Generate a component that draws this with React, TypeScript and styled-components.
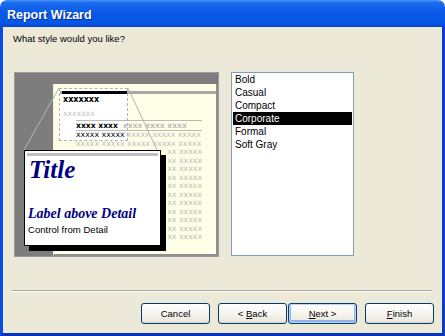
import React from 'react'
import styled, { createGlobalStyle } from 'styled-components'

const GlobalStyle = createGlobalStyle`
  html, body {
    margin: 0;
    padding: 0;
    background: #ffffff;
    overflow: hidden;
  }
  #root {
    width: 445px;
    height: 336px;
  }
`

const Window = styled.div`
  width: 445px;
  height: 336px;
  display: flex;
  flex-direction: column;
  font-family: "Liberation Sans", Arial, sans-serif;
`

const TitleBar = styled.div`
  height: 27px;
  flex: none;
  box-sizing: border-box;
  padding: 2px 0 0 7px;
  display: flex;
  align-items: center;
  border-radius: 7px 7px 0 0;
  background: linear-gradient(180deg, #4a93fa 0%, #1d6cf0 10%, #0a5ae7 45%, #0656e4 85%, #0546d0 100%);
  color: #ffffff;
  font-weight: bold;
  font-size: 12.5px;
  text-shadow: 1px 1px 0 #0b2f9a;
`

const Body = styled.div`
  flex: 1;
  background: #ece9d8;
  border: 3px solid #0b4be2;
  border-top: none;
  border-right-color: #0a3cc8;
  border-bottom-color: #0834bf;
  display: flex;
  flex-direction: column;
`

const Prompt = styled.div`
  font-size: 9.5px;
  line-height: 12px;
  color: #000;
  padding: 6px 0 0 10px;
`

const MainRow = styled.div`
  display: flex;
  align-items: flex-start;
  gap: 12px;
  margin-top: 27px;
  padding-left: 11px;
`

/* ---------- preview ---------- */

const Frame = styled.div`
  position: relative;
  width: 205px;
  height: 185px;
  box-sizing: border-box;
  border: 1px solid #9a9a9a;
  background: #7d7d7d;
  padding: 11px 0 0 38px;
  display: flex;
`

const Page = styled.div`
  position: relative;
  flex: 1;
  background: #fffee6;
  border-right: 2px solid #8f8f8f;
  border-bottom: 2px solid #8f8f8f;
  border-left: 1px solid #f4f2dc;
`

const Highlight = styled.div`
  position: absolute;
  left: 5px;
  top: 4px;
  width: 69px;
  height: 53px;
  box-sizing: border-box;
  border: 1px dashed #b4b4b4;
  background: #ffffff;
`

const PageContent = styled.div`
  position: relative;
  padding: 7px 0 0 6px;
  font-family: "DejaVu Sans", Verdana, sans-serif;
`

const TopRule = styled.div`
  height: 3px;
  background: #a9a9a9;
`

const TopBar = styled.div`
  width: 65px;
  height: 3px;
  margin-left: 2px;
  background: #000;
`

const PageHeader = styled.div<{ $faint?: boolean }>`
  margin: ${p => (p.$faint ? '4px' : '1px')} 0 0 3px;
  font-size: ${p => (p.$faint ? '7.7px' : '8px')};
  font-weight: ${p => (p.$faint ? 'normal' : 'bold')};
  line-height: 10px;
  color: ${p => (p.$faint ? '#c4c4c4' : '#000')};
  white-space: nowrap;
`

const Table = styled.div`
  margin: 1px 0 0 16px;
  width: 126px;
  border-top: 1px solid #b9b9b9;
`

const HeaderRow = styled.div`
  font-size: 7.6px;
  font-weight: bold;
  line-height: 9px;
  white-space: nowrap;
  border-bottom: 1px solid #b9b9b9;
  display: flex;
  gap: 5px;
`

/* rows that run under the title card only show their right-hand end */
const DetailRow = styled.div<{ $covered?: boolean }>`
  font-size: 7.8px;
  line-height: 8.5px;
  height: 8.5px;
  white-space: pre;
  display: flex;
  justify-content: ${p => (p.$covered ? 'flex-end' : 'flex-start')};
  gap: 2px;
`

const Ink = styled.span<{ $faint?: boolean }>`
  color: ${p => (p.$faint ? '#bdbdbd' : '#000')};
`

const Lines = styled.svg`
  position: absolute;
  left: 0;
  top: 0;
  overflow: visible;
`

const Card = styled.div`
  position: absolute;
  left: 9px;
  top: 77px;
  width: 137px;
  height: 96px;
  box-sizing: border-box;
  border: 1px solid #000;
  background: #ffffff;
  box-shadow: 5px 5px 0 #000;
  padding: 2px 2px 0 2px;
`

const CardRule = styled.div`
  height: 3px;
  background: #c0c0c0;
`

const CardTitle = styled.div`
  margin: 2px 0 0 2px;
  font-family: "Liberation Serif", "Times New Roman", serif;
  font-style: italic;
  font-weight: bold;
  font-size: 25px;
  line-height: 24px;
  color: #000080;
`

const CardLabel = styled.div`
  margin: 25px 0 0 1px;
  font-family: "Liberation Serif", "Times New Roman", serif;
  font-style: italic;
  font-weight: bold;
  font-size: 14px;
  line-height: 14px;
  color: #000080;
  white-space: nowrap;
`

const CardControl = styled.div`
  margin: 3px 0 0 1px;
  font-size: 9.6px;
  line-height: 12px;
  color: #000;
  white-space: nowrap;
`

/* ---------- list ---------- */

const ListBox = styled.div`
  width: 123px;
  height: 184px;
  box-sizing: border-box;
  border: 1px solid #7f9db9;
  background: #ffffff;
  padding: 0 1px;
`

const ListItem = styled.div<{ $selected?: boolean }>`
  height: 13px;
  line-height: 13px;
  padding-left: 2px;
  font-size: 10px;
  color: ${p => (p.$selected ? '#ffffff' : '#000000')};
  background: ${p => (p.$selected ? '#000000' : 'transparent')};
`

/* ---------- footer ---------- */

const Separator = styled.div`
  margin: 33px 0 0 9px;
  width: 420px;
  height: 1px;
  background: #aca899;
  border-bottom: 1px solid #ffffff;
`

const ButtonRow = styled.div`
  display: flex;
  justify-content: flex-end;
  margin-top: 11px;
  padding-right: 8px;
`

const Button = styled.div<{ $gap: number; $default?: boolean }>`
  width: 69px;
  height: 21px;
  box-sizing: border-box;
  margin-left: ${p => p.$gap}px;
  border: 1px solid #003c74;
  border-radius: 3px;
  background: linear-gradient(180deg, #ffffff 0%, #f6f5f0 50%, #ebe8db 90%, #d8d2c2 100%);
  box-shadow: ${p => (p.$default ? 'inset 0 0 0 1px #c2d5f7, inset 0 -1px 0 2px #8fb0ea' : 'none')};
  display: flex;
  align-items: center;
  justify-content: center;
  font-size: 9.5px;
  color: #000;
  white-space: pre;
`

const Key = styled.span`
  text-decoration: underline;
`

const styles = ['Bold', 'Casual', 'Compact', 'Corporate', 'Formal', 'Soft Gray']

export default function App() {
  const rows = Array.from({ length: 12 })

  return (
    <>
      <GlobalStyle />
      <Window>
        <TitleBar>Report Wizard</TitleBar>
        <Body>
          <Prompt>What style would you like?</Prompt>
          <MainRow>
            <Frame>
              <Page>
                <Highlight />
                <PageContent>
                  <TopRule>
                    <TopBar />
                  </TopRule>
                  <PageHeader>xxxxxxx</PageHeader>
                  <PageHeader $faint>xxxxxxx</PageHeader>
                  <Table>
                    <HeaderRow>
                      <Ink>xxxx xxxx</Ink>
                      <Ink $faint>xxxx xxxx xxxx</Ink>
                    </HeaderRow>
                    <DetailRow>
                      <Ink>xxxxx xxxxx</Ink>
                      <Ink $faint>xxxxx xxxxx xxxxx</Ink>
                    </DetailRow>
                    {rows.map((_, i) =>
                      i === 0 ? (
                        <DetailRow key={i}>
                          <Ink $faint>xxxxx xxxxx xxxxx xxxxx xxxxx</Ink>
                        </DetailRow>
                      ) : (
                        <DetailRow key={i} $covered>
                          <Ink $faint>xx xxxxx</Ink>
                        </DetailRow>
                      )
                    )}
                  </Table>
                </PageContent>
              </Page>
              <Lines width="205" height="185">
                <line x1="44" y1="15" x2="9" y2="77" stroke="#b4b4b4" strokeWidth="1" />
                <line x1="113" y1="15" x2="142" y2="77" stroke="#b4b4b4" strokeWidth="1" />
              </Lines>
              <Card>
                <CardRule />
                <CardTitle>Title</CardTitle>
                <CardLabel>Label above Detail</CardLabel>
                <CardControl>Control from Detail</CardControl>
              </Card>
            </Frame>
            <ListBox>
              {styles.map(s => (
                <ListItem key={s} $selected={s === 'Corporate'}>{s}</ListItem>
              ))}
            </ListBox>
          </MainRow>
          <Separator />
          <ButtonRow>
            <Button $gap={0}>Cancel</Button>
            <Button $gap={8}>{'< '}<Key>B</Key>ack</Button>
            <Button $gap={1} $default><Key>N</Key>{'ext >'}</Button>
            <Button $gap={8}><Key>F</Key>inish</Button>
          </ButtonRow>
        </Body>
      </Window>
    </>
  )
}
